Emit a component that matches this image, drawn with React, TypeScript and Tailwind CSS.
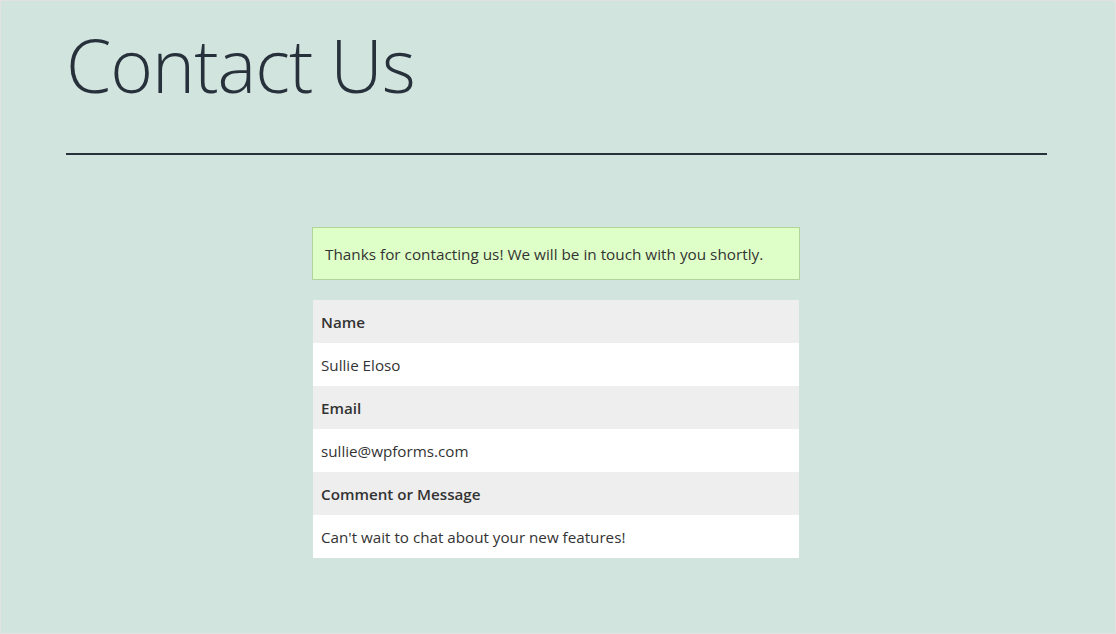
export default function App() {
  const rows: [string, string][] = [
    ["Name", "Sullie Eloso"],
    ["Email", "sullie@wpforms.com"],
    ["Comment or Message", "Can't wait to chat about your new features!"],
  ];
  return (
    <div
      className="w-[1116px] h-[634px] bg-[#d2e4de] border border-[#e2e2e2] text-[#2c3338] overflow-hidden"
      style={{ fontFamily: '"Open Sans", "Noto Sans", sans-serif' }}
    >
      <div className="px-[65px]">
        <h1 className="text-[73px] font-light leading-none text-[#27313b] pt-[27px] tracking-[-1px]">
          Contact Us
        </h1>
        <div className="mt-[52px] h-[2px] bg-[#27313b] w-[981px]" />
      </div>
      <div className="mt-[72px] ml-[311px] w-[488px]">
        <div className="h-[53px] bg-[#dfffc8] border border-[#b3d499] flex items-center pl-[12px] pt-[2px] text-[15.3px] text-[#333]">
          Thanks for contacting us! We will be in touch with you shortly.
        </div>
        <div className="mt-[20px] ml-[1px] w-[486px] text-[15.2px] text-[#333]">
          {rows.map(([k, v]) => (
            <div key={k}>
              <div className="h-[43px] bg-[#eeeeee] flex items-center pl-[8px] pt-[2px] font-semibold">{k}</div>
              <div className="h-[43px] bg-white flex items-center pl-[8px] pt-[2px]">{v}</div>
            </div>
          ))}
        </div>
      </div>
    </div>
  );
}
